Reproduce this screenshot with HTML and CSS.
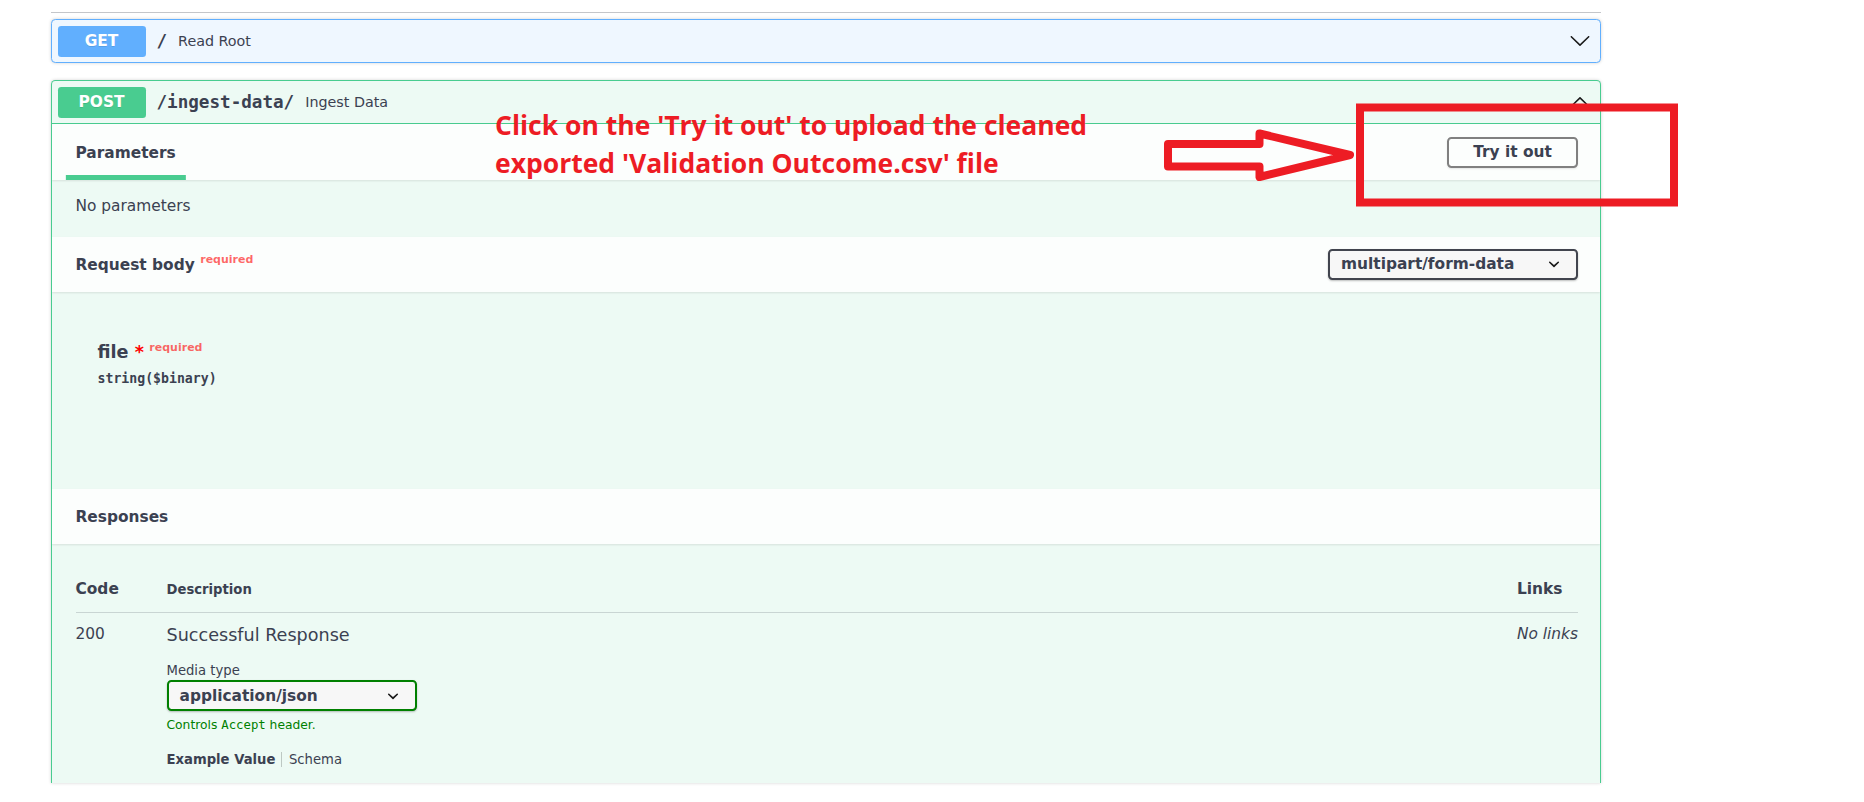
FILE: index.html
```html
<!DOCTYPE html>
<html lang="en">
<head>
<meta charset="utf-8">
<title>FastAPI - Swagger UI</title>
<link rel="stylesheet" href="styles.css">
</head>
<body>
<div class="page">
  <div class="wrapper">
    <div class="tag-rule"></div>

    <div class="opblock opblock-get">
      <div class="summary">
        <span class="method method-get">GET</span>
        <span class="path">/</span>
        <span class="summary-desc">Read Root</span>
        <svg class="arrow" viewBox="0 0.5 20 20" width="22" height="22"><path d="M17.418 6.109c.272-.268.709-.268.979 0s.271.701 0 .969l-7.908 7.83c-.27.268-.707.268-.979 0l-7.908-7.83c-.27-.268-.27-.701 0-.969.271-.268.709-.268.979 0L10 13.25l7.418-7.141z"/></svg>
      </div>
    </div>

    <div class="opblock opblock-post">
      <div class="summary summary-open">
        <span class="method method-post">POST</span>
        <span class="path">/ingest-data/</span>
        <span class="summary-desc">Ingest Data</span>
        <svg class="arrow" viewBox="0 0.5 20 20" width="22" height="22"><path transform="rotate(180 10 10.5)" d="M17.418 6.109c.272-.268.709-.268.979 0s.271.701 0 .969l-7.908 7.83c-.27.268-.707.268-.979 0l-7.908-7.830c-.27-.268-.27-.701 0-.969.271-.268.709-.268.979 0L10 13.25l7.418-7.141z"/></svg>
      </div>

      <div class="section-header tab-header">
        <h4 class="title"><span class="tab-active">Parameters</span></h4>
        <button class="btn-try">Try it out</button>
      </div>

      <div class="desc-wrapper"><p class="no-params">No parameters</p></div>

      <div class="section-header">
        <h4 class="title">Request body<span class="req-tag">required</span></h4>
        <div class="select select-dark">
          <span>multipart/form-data</span>
          <svg viewBox="0 0 20 20" width="22" height="22"><path d="M13.418 7.859a.695.695 0 0 1 .978 0 .68.68 0 0 1 0 .969l-3.908 3.83a.697.697 0 0 1-.979 0l-3.908-3.830a.68.68 0 0 1 0-.969.695.695 0 0 1 .978 0L10 11l3.418-3.141z"/></svg>
        </div>
      </div>

      <div class="body-params">
        <div class="param-name">file<span class="star">&nbsp;*</span><span class="param-req">required</span></div>
        <div class="param-type">string($binary)</div>
      </div>

      <div class="section-header">
        <h4 class="title">Responses</h4>
      </div>

      <div class="responses-inner">
        <div class="resp-table">
          <div class="th th-big">Code</div>
          <div class="th th-small">Description</div>
          <div class="th th-big">Links</div>

          <div class="td td-code">200</div>
          <div class="td td-desc">
            <p class="resp-text">Successful Response</p>
            <div class="media-title">Media type</div>
            <div class="select select-green">
              <span>application/json</span>
              <svg viewBox="0 0 20 20" width="22" height="22"><path d="M13.418 7.859a.695.695 0 0 1 .978 0 .68.68 0 0 1 0 .969l-3.908 3.83a.697.697 0 0 1-.979 0l-3.908-3.830a.68.68 0 0 1 0-.969.695.695 0 0 1 .978 0L10 11l3.418-3.141z"/></svg>
            </div>
            <div class="accept-msg">Controls <code class="code">Accept</code> header.</div>
            <div class="ex-tabs">
              <span class="ex-tab ex-tab-active">Example Value</span>
              <span class="ex-tab">Schema</span>
            </div>
          </div>
          <div class="td td-links"><i>No links</i></div>
        </div>
      </div>
    </div>
  </div>

  <div class="annot">
    <svg class="annot-svg" width="1864" height="802" viewBox="0 0 1864 802">
      <rect x="1360" y="107.5" width="314" height="95" fill="none" stroke="#ed1c24" stroke-width="8"/>
      <polygon points="1168,144 1259.5,144 1259.5,133.5 1350,155 1259.5,177 1259.5,166.5 1168,166.5" fill="none" stroke="#ed1c24" stroke-width="8" stroke-linejoin="round"/>
    </svg>
    <div class="annot-text">Click on the 'Try it out' to upload the cleaned<br>exported 'Validation Outcome.csv' file</div>
  </div>
</div>
</body>
</html>
```

FILE: styles.css
```css
html, body {
  margin: 0;
  padding: 0;
  background: #ffffff;
}

body {
  font-family: "DejaVu Sans", sans-serif;
  color: #3b4151;
}

.page {
  position: relative;
  width: 1864px;
  height: 802px;
  overflow: hidden;
}

.wrapper {
  width: 1550px;
  margin-left: 51px;
  padding-top: 12px;
}

.tag-rule {
  height: 1px;
  background: rgba(59, 65, 81, 0.3);
}

.opblock {
  box-sizing: border-box;
  border: 1px solid;
  border-radius: 4.4px;
  box-shadow: 0 0 3.3px rgba(0, 0, 0, 0.19);
}

.opblock-get {
  margin-top: 6px;
  background: #eff7ff;
  border-color: #61affe;
}

.opblock-post {
  margin-top: 17px;
  height: 703px;
  overflow: hidden;
  background: #edfaf4;
  border-color: #49cc90;
  border-bottom: 0;
  border-radius: 4.4px 4.4px 0 0;
}

.summary {
  display: flex;
  align-items: center;
  padding: 5.5px;
}

.summary-open {
  border-bottom: 1px solid #49cc90;
}

.method {
  width: 88px;
  height: 31px;
  display: flex;
  align-items: center;
  justify-content: center;
  border-radius: 3.3px;
  color: #ffffff;
  font-size: 15.4px;
  font-weight: 700;
  text-shadow: 0 1px 0 rgba(0, 0, 0, 0.1);
}

.method-get { background: #61affe; }
.method-post { background: #49cc90; }

.path {
  font-family: "DejaVu Sans Mono", monospace;
  font-size: 17.6px;
  font-weight: 700;
  padding: 0 11px;
  color: #3b4151;
}

.summary-desc {
  flex: 1;
  font-size: 14.3px;
  color: #3b4151;
}

.arrow {
  margin-right: 4px;
  fill: #1a1a1a;
}

.section-header {
  box-sizing: border-box;
  min-height: 55px;
  padding: 0 22px 0 23.5px;
  display: flex;
  align-items: center;
  justify-content: space-between;
  background: rgba(255, 255, 255, 0.8);
  box-shadow: 0 1px 2px rgba(0, 0, 0, 0.1);
  position: relative;
}

.tab-header {
  min-height: 56px;
}

.title {
  margin: 0;
  font-size: 15.4px;
  font-weight: 700;
  color: #3b4151;
  position: relative;
  top: 1px;
}

.tab-active {
  position: relative;
}

.tab-active::after {
  content: "";
  position: absolute;
  left: 50%;
  bottom: -17.5px;
  width: 120%;
  height: 4.4px;
  transform: translateX(-50%);
  background: #49cc90;
}

.btn-try {
  box-sizing: border-box;
  width: 131px;
  height: 31px;
  padding: 0;
  border: 2.2px solid #808080;
  border-radius: 4.4px;
  background: transparent;
  box-shadow: 0 1px 2px rgba(0, 0, 0, 0.1);
  font-family: "DejaVu Sans", sans-serif;
  font-size: 15.4px;
  font-weight: 700;
  color: #3b4151;
}

.desc-wrapper {
  padding: 16.5px 22px 16.5px 23.5px;
  margin-bottom: 5.5px;
}

.no-params {
  margin: 0;
  font-size: 15.4px;
  color: #3b4151;
}

.req-tag {
  position: relative;
  top: -6.6px;
  padding-left: 5.5px;
  font-size: 11px;
  font-weight: 700;
  color: rgba(255, 0, 0, 0.6);
}

.select {
  box-sizing: border-box;
  width: 250px;
  height: 31px;
  display: flex;
  align-items: center;
  justify-content: space-between;
  padding: 0 11px;
  border: 2.2px solid #41444e;
  border-radius: 4.4px;
  background: #f7f7f7;
  box-shadow: 0 1px 2px 0 rgba(0, 0, 0, 0.25);
  font-size: 15.4px;
  font-weight: 700;
  color: #3b4151;
}

.select svg {
  fill: #1a1a1a;
}

.select-green {
  border-color: #008000;
  margin-top: 2.2px;
}

.body-params {
  box-sizing: border-box;
  height: 197px;
  padding: 50px 0 0 45.5px;
}

.param-name {
  font-size: 17.6px;
  font-weight: 700;
  color: #3b4151;
}

.star {
  color: #ff0000;
}

.param-req {
  position: relative;
  top: -6.6px;
  padding-left: 5.5px;
  font-size: 11px;
  font-weight: 700;
  color: rgba(255, 0, 0, 0.6);
}

.param-type {
  padding: 9px 0 5.5px;
  font-family: "DejaVu Sans Mono", monospace;
  font-size: 13.2px;
  font-weight: 700;
  color: #3b4151;
}

.responses-inner {
  padding: 22px 22px 22px 23.5px;
}

.resp-table {
  display: grid;
  grid-template-columns: 91px 1fr auto;
}

.th {
  display: flex;
  align-items: center;
  height: 45.3px;
  padding-top: 1px;
  box-sizing: content-box;
  border-bottom: 1px solid rgba(59, 65, 81, 0.2);
  font-weight: 700;
  color: #3b4151;
}

.th-big { font-size: 15.4px; }
.th-small { font-size: 13.2px; }

.td {
  padding-top: 11.8px;
  color: #3b4151;
}

.td-code {
  font-size: 15.4px;
}

.td-links {
  font-size: 15.4px;
}

.resp-text {
  margin: 0;
  font-size: 17.6px;
}

.media-title {
  margin-top: 18.3px;
  font-size: 13.2px;
}

.accept-msg {
  margin-top: 7px;
  font-size: 12.3px;
  color: #008000;
}

.code {
  font-family: "DejaVu Sans Mono", monospace;
  font-size: 12.3px;
}

.ex-tabs {
  margin-top: 19.5px;
  display: flex;
  font-size: 13.2px;
}

.ex-tab-active {
  font-weight: 700;
  padding-right: 6px;
  border-right: 1px solid rgba(0, 0, 0, 0.2);
}

.ex-tab + .ex-tab {
  padding-left: 6.6px;
}

.annot {
  position: absolute;
  left: 0;
  top: 0;
  width: 1864px;
  height: 802px;
  pointer-events: none;
}

.annot-svg {
  position: absolute;
  left: 0;
  top: 0;
}

.annot-text {
  position: absolute;
  left: 495px;
  top: 106px;
  font-family: "Open Sans", sans-serif;
  font-weight: 700;
  font-size: 26.5px;
  line-height: 38px;
  color: #ed1c24;
  white-space: nowrap;
}
```
